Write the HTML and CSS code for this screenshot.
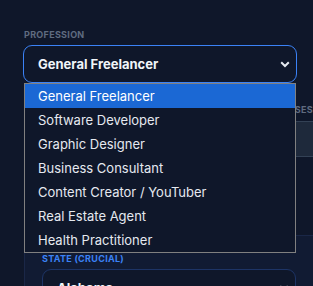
FILE: index.html
```html
<!DOCTYPE html>
<html>
<head>
<meta charset="utf-8">
<link rel="stylesheet" href="styles.css">
</head>
<body>
<div class="page">
  <div class="field">
    <div class="label">PROFESSION</div>
    <div class="select active">
      <span class="value">General Freelancer</span>
      <svg class="chev" width="10" height="7" viewBox="0 0 10 7"><polyline points="1.2,1.2 5,5 8.8,1.2" fill="none" stroke="#e5e9f0" stroke-width="2"/></svg>
    </div>
    <ul class="menu">
      <li class="opt sel">General Freelancer</li>
      <li class="opt">Software Developer</li>
      <li class="opt">Graphic Designer</li>
      <li class="opt">Business Consultant</li>
      <li class="opt">Content Creator / YouTuber</li>
      <li class="opt">Real Estate Agent</li>
      <li class="opt">Health Practitioner</li>
    </ul>
  </div>
  <div class="row">
    <div class="col"></div>
    <div class="col">
      <div class="label">EXPENSES</div>
      <div class="input"></div>
    </div>
  </div>
  <div class="panel">
    <div class="label blue">STATE (CRUCIAL)</div>
    <div class="select dim">
      <span class="value">Alabama</span>
      <svg class="chev" width="10" height="7" viewBox="0 0 10 7"><polyline points="1.2,1.2 5,5 8.8,1.2" fill="none" stroke="#e5e9f0" stroke-width="2"/></svg>
    </div>
  </div>
</div>
</body>
</html>
```
FILE: styles.css
```css
html, body {
  margin: 0;
  padding: 0;
  background: #0f172a;
  overflow: hidden;
  width: 313px;
  height: 286px;
}
body {
  font-family: Inter, "Noto Sans", sans-serif;
  color: #e2e8f0;
}
.page {
  padding: 29px 0 0 23px;
}
.field {
  position: relative;
  width: 274px;
}
.label {
  font-size: 9px;
  line-height: 11px;
  font-weight: 700;
  letter-spacing: 0.3px;
  color: #5f6b80;
  padding-left: 1px;
  white-space: nowrap;
}
.label.blue {
  color: #3b82f6;
  padding-left: 0;
}
.select {
  margin-top: 5px;
  box-sizing: border-box;
  height: 38px;
  border: 1px solid #3b82f6;
  border-radius: 9px;
  display: flex;
  align-items: center;
  justify-content: space-between;
  padding: 0 6px 0 14px;
  background: #0f172a;
}
.value {
  font-size: 13px;
  font-weight: 700;
  color: #f1f5f9;
}
.chev {
  display: block;
}
.menu {
  position: absolute;
  left: 1px;
  top: 54px;
  margin: 0;
  padding: 0;
  list-style: none;
  width: 272px;
  box-sizing: border-box;
  border: 1px solid #808080;
  background: #0f172a;
  z-index: 5;
}
.opt {
  height: 24px;
  line-height: 24px;
  font-size: 13px;
  padding-left: 13px;
  color: #e5e9f0;
  white-space: nowrap;
}
.opt.sel {
  background: #1b68d4;
  color: #ffffff;
}
.row {
  margin-top: 21px;
  display: grid;
  grid-template-columns: 231px 120px;
  gap: 8px;
}
.input {
  margin-top: 6px;
  height: 36px;
  box-sizing: border-box;
  background: #1e293b;
  border-top: 1px solid #334155;
  border-bottom: 1px solid #334155;
}
.panel {
  margin-top: 78px;
  margin-left: 1px;
  width: 300px;
  box-sizing: border-box;
  padding: 17px 0 0 17px;
  background: #111b33;
  border-top: 1px solid #1a2747;
  border-left: 1px solid #1a2747;
  border-radius: 6px 0 0 0;
  height: 60px;
}
.select.dim {
  width: 254px;
  border-color: #1d3466;
  margin-top: 5px;
}
```
